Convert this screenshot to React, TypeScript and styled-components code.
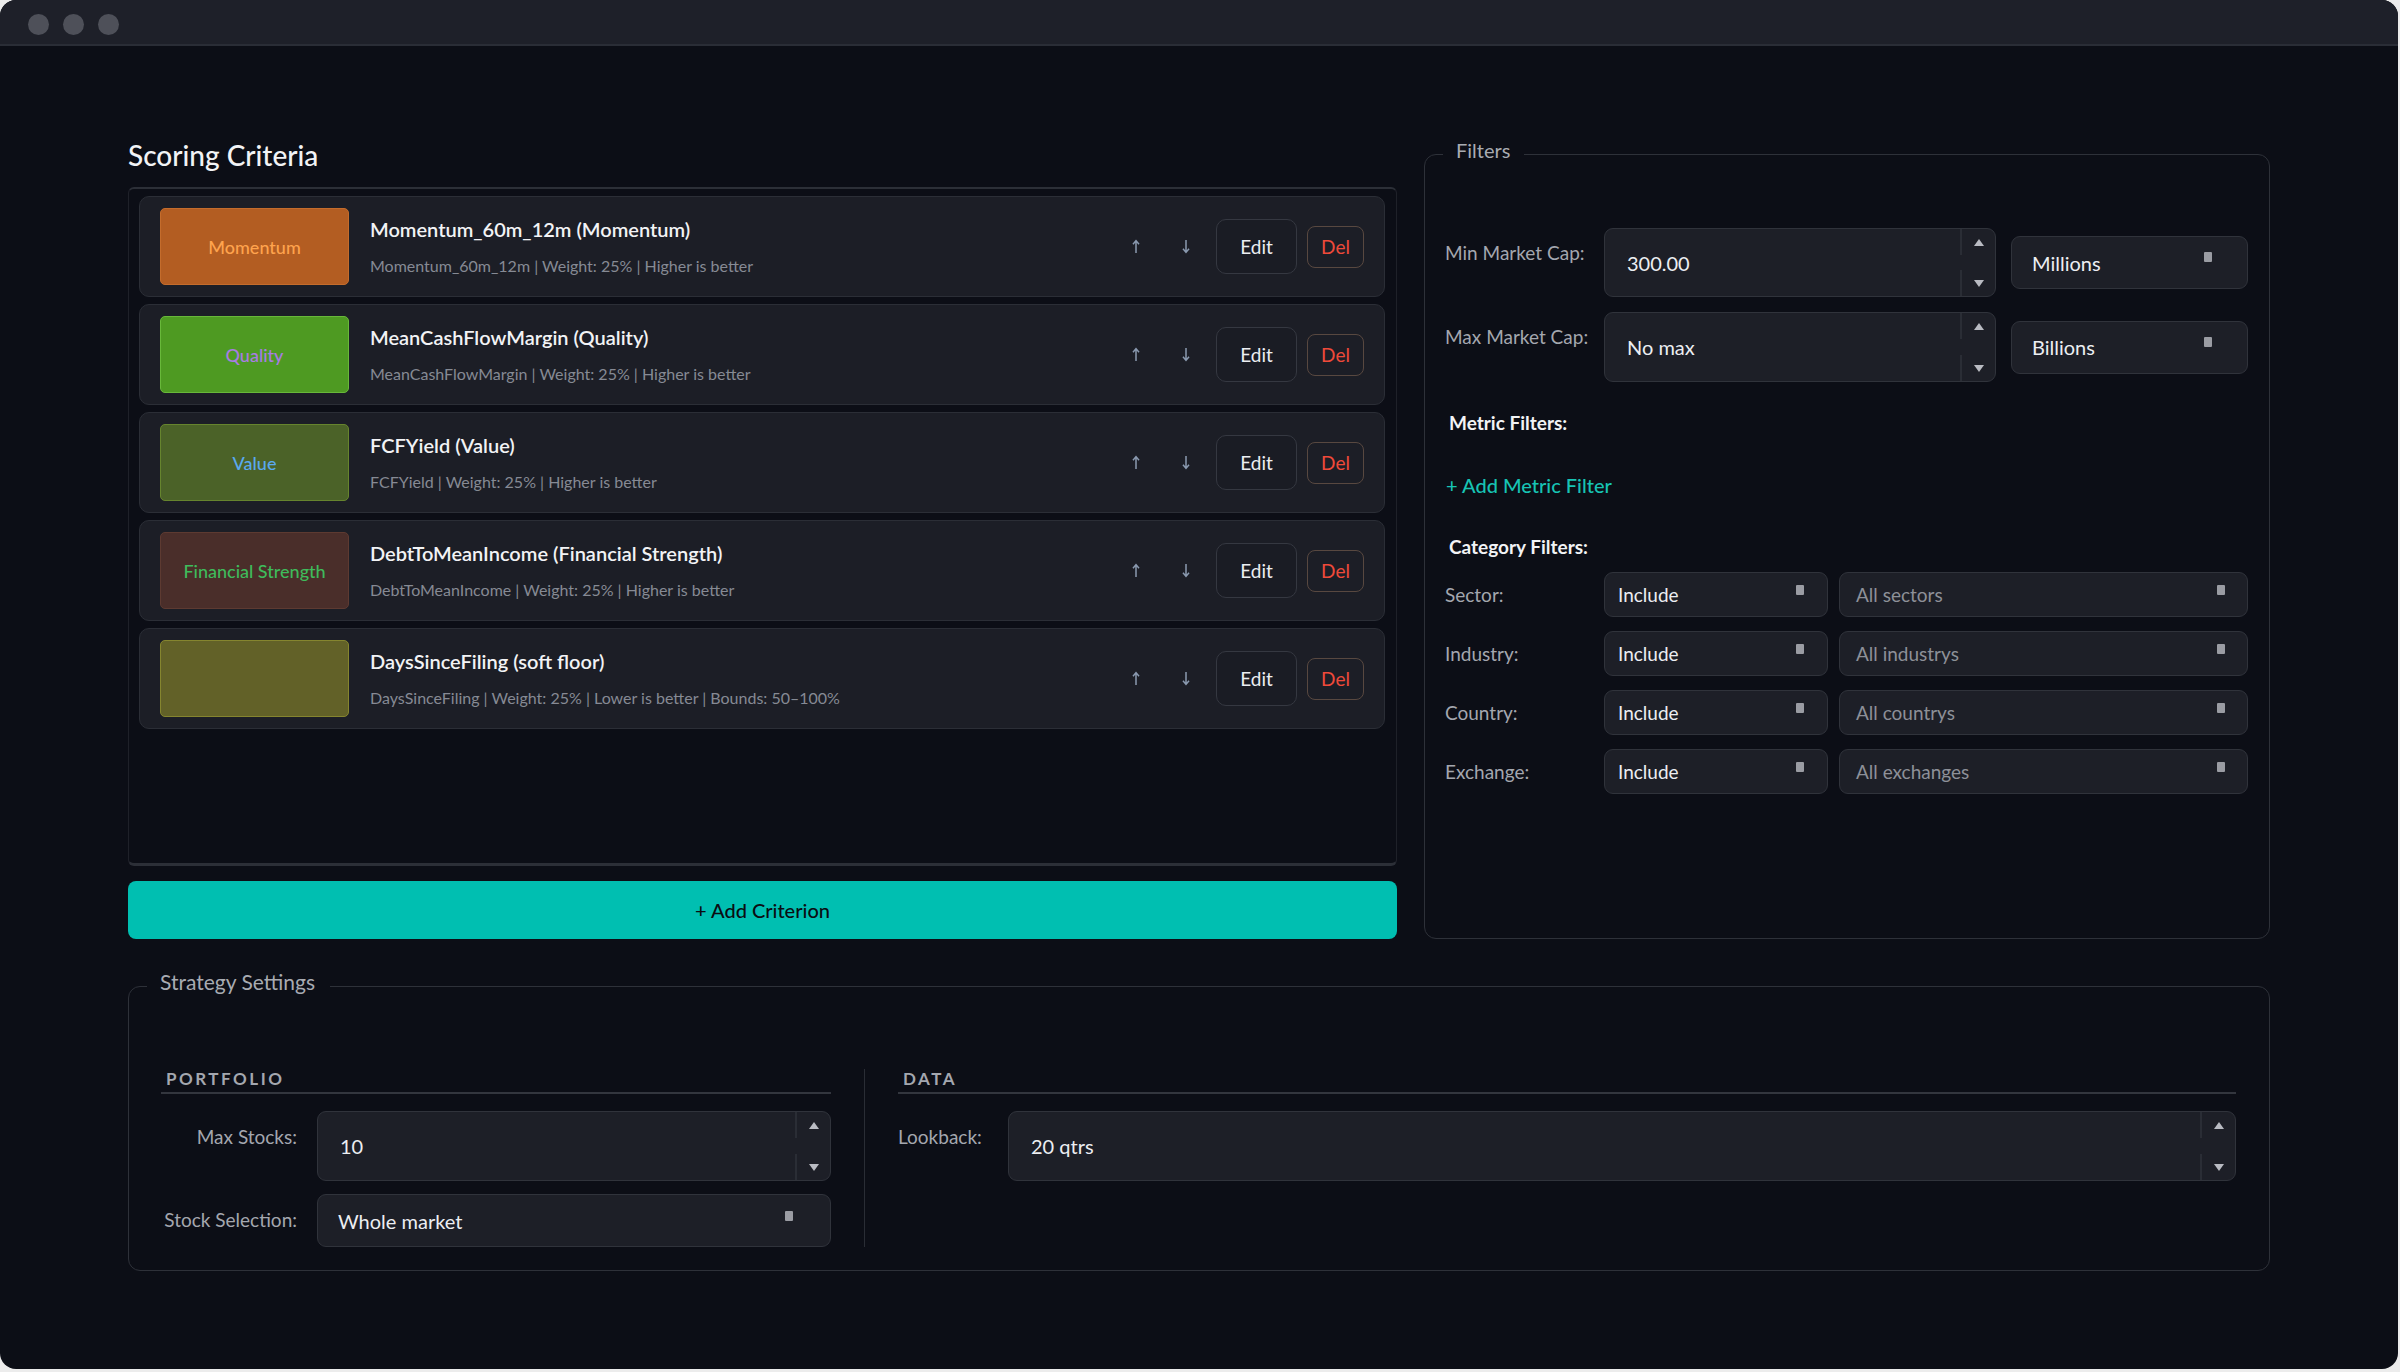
import React from "react";
import styled, { createGlobalStyle } from "styled-components";

type Criterion = {
    badge: string;
    bg: string;
    border: string;
    color: string;
    title: string;
    meta: string;
};

const criteria: Criterion[] = [
    {
        badge: "Momentum",
        bg: "#b35d22",
        border: "#c46c2c",
        color: "#ffa34d",
        title: "Momentum_60m_12m (Momentum)",
        meta: "Momentum_60m_12m | Weight: 25% | Higher is better",
    },
    {
        badge: "Quality",
        bg: "#4e9a22",
        border: "#68b83a",
        color: "#a87de3",
        title: "MeanCashFlowMargin (Quality)",
        meta: "MeanCashFlowMargin | Weight: 25% | Higher is better",
    },
    {
        badge: "Value",
        bg: "#4b6228",
        border: "#66842e",
        color: "#5aa9ef",
        title: "FCFYield (Value)",
        meta: "FCFYield | Weight: 25% | Higher is better",
    },
    {
        badge: "Financial Strength",
        bg: "#4a2e2a",
        border: "#5d3a31",
        color: "#3fbb5b",
        title: "DebtToMeanIncome (Financial Strength)",
        meta: "DebtToMeanIncome | Weight: 25% | Higher is better",
    },
    {
        badge: "",
        bg: "#626128",
        border: "#85852f",
        color: "#ffffff",
        title: "DaysSinceFiling (soft floor)",
        meta: "DaysSinceFiling | Weight: 25% | Lower is better | Bounds: 50–100%",
    },
];

const categories = [
    { label: "Sector:", placeholder: "All sectors" },
    { label: "Industry:", placeholder: "All industrys" },
    { label: "Country:", placeholder: "All countrys" },
    { label: "Exchange:", placeholder: "All exchanges" },
];

const Arrow = ({ down }: { down?: boolean }) => (
    <svg width="8" height="15" viewBox="0 0 8 15" style={{ transform: down ? "rotate(180deg)" : undefined }}>
        <path d="M4 14V2M1 5.2L4 1.6L7 5.2" stroke="#8a9ab0" strokeWidth="1.5" fill="none" />
    </svg>
);

const NumberInput = ({ value, height }: { value: string; height: number }) => (
    <NumberBox $h={height}>
        <NumberValue>{value}</NumberValue>
        <Spinner>
            <SpinBtn />
            <SpinBtn $down />
        </Spinner>
    </NumberBox>
);

type SelectProps = {
    value: string;
    height: number;
    padLeft: number;
    padRight: number;
    caretTop: number;
    muted?: boolean;
    size?: number;
};

const Select = ({ value, height, padLeft, padRight, caretTop, muted, size = 20 }: SelectProps) => (
    <SelectBox $h={height} $pl={padLeft} $pr={padRight} $muted={muted} $fs={size}>
        <span>{value}</span>
        <Caret $mt={caretTop} />
    </SelectBox>
);

export default function App() {
    return (
        <>
            <GlobalStyle />
            <Window>
                <TitleBar>
                    <Dot />
                    <Dot />
                    <Dot />
                </TitleBar>
                <Content>
                    <TopGrid>
                        <LeftColumn>
                            <PageTitle>Scoring Criteria</PageTitle>
                            <ListBox>
                                {criteria.map((c) => (
                                    <Card key={c.title}>
                                        <Badge $bg={c.bg} $border={c.border} $color={c.color}>
                                            {c.badge}
                                        </Badge>
                                        <CardText>
                                            <CardTitle>{c.title}</CardTitle>
                                            <CardMeta>{c.meta}</CardMeta>
                                        </CardText>
                                        <Actions>
                                            <ArrowButton>
                                                <Arrow />
                                            </ArrowButton>
                                            <ArrowButton>
                                                <Arrow down />
                                            </ArrowButton>
                                            <EditButton>Edit</EditButton>
                                            <DelButton>Del</DelButton>
                                        </Actions>
                                    </Card>
                                ))}
                            </ListBox>
                            <AddButton>+ Add Criterion</AddButton>
                        </LeftColumn>

                        <FiltersSet>
                            <Legend>Filters</Legend>
                            <CapRow>
                                <FieldLabel $top>Min Market Cap:</FieldLabel>
                                <NumberInput value="300.00" height={69} />
                                <Select value="Millions" height={53} padLeft={20} padRight={35} caretTop={15} />
                            </CapRow>
                            <CapRow>
                                <FieldLabel $top>Max Market Cap:</FieldLabel>
                                <NumberInput value="No max" height={70} />
                                <Select value="Billions" height={53} padLeft={20} padRight={35} caretTop={15} />
                            </CapRow>
                            <SubHeading $mt={29}>Metric Filters:</SubHeading>
                            <AddLink>+ Add Metric Filter</AddLink>
                            <SubHeading $mt={38}>Category Filters:</SubHeading>
                            <CategoryList>
                                {categories.map((cat) => (
                                    <CategoryRow key={cat.label}>
                                        <FieldLabel>{cat.label}</FieldLabel>
                                        <Select value="Include" height={45} padLeft={13} padRight={23} caretTop={12} size={19} />
                                        <Select value={cat.placeholder} height={45} padLeft={16} padRight={22} caretTop={12} size={19} muted />
                                    </CategoryRow>
                                ))}
                            </CategoryList>
                        </FiltersSet>
                    </TopGrid>

                    <StrategySet>
                        <Legend $wide>Strategy Settings</Legend>
                        <SettingsGrid>
                            <Section>
                                <SectionHeader>Portfolio</SectionHeader>
                                <PortfolioRow>
                                    <SettingLabel $right>Max Stocks:</SettingLabel>
                                    <NumberInput value="10" height={70} />
                                </PortfolioRow>
                                <PortfolioRow>
                                    <SettingLabel $right>Stock Selection:</SettingLabel>
                                    <Select value="Whole market" height={53} padLeft={20} padRight={37} caretTop={16} />
                                </PortfolioRow>
                            </Section>
                            <Divider />
                            <Section>
                                <SectionHeader>Data</SectionHeader>
                                <DataRow>
                                    <SettingLabel>Lookback:</SettingLabel>
                                    <NumberInput value="20 qtrs" height={70} />
                                </DataRow>
                            </Section>
                        </SettingsGrid>
                    </StrategySet>
                </Content>
            </Window>
        </>
    );
}

const GlobalStyle = createGlobalStyle`
    html, body {
        margin: 0;
        padding: 0;
        background: #ececec;
    }
    body {
        font-family: Lato, "Noto Sans", "Liberation Sans", sans-serif;
        color: #eceef2;
    }
    * {
        box-sizing: border-box;
    }
`;

const Window = styled.div`
    width: 2398px;
    height: 1369px;
    background: #0c0e16;
    border-radius: 16px;
    overflow: hidden;
    display: flex;
    flex-direction: column;
`;

const TitleBar = styled.div`
    height: 46px;
    flex-shrink: 0;
    display: flex;
    align-items: center;
    gap: 14px;
    padding: 4px 0 0 28px;
    background: #1e2029;
    border-bottom: 2px solid #2a2d36;
`;

const Dot = styled.span`
    width: 21px;
    height: 21px;
    border-radius: 50%;
    background: #4e5059;
`;

const Content = styled.div`
    padding: 92px 128px 0 128px;
`;

const TopGrid = styled.div`
    display: grid;
    grid-template-columns: 1269px 846px;
    column-gap: 27px;
`;

const LeftColumn = styled.div`
    display: flex;
    flex-direction: column;
`;

const PageTitle = styled.h2`
    margin: 0;
    font-size: 28px;
    line-height: 34px;
    font-weight: 500;
    color: #f2f3f5;
`;

const ListBox = styled.div`
    margin-top: 15px;
    height: 679px;
    padding: 7px 11px 0 10px;
    display: flex;
    flex-direction: column;
    gap: 7px;
    border: 1px solid #1f2129;
    border-top: 2px solid #2c2f37;
    border-bottom: 3px solid #2c2f37;
    border-radius: 6px;
`;

const Card = styled.div`
    height: 101px;
    display: flex;
    align-items: center;
    padding: 0 20px;
    background: #1c1e26;
    border: 1px solid #2b2e36;
    border-radius: 10px;
`;

const Badge = styled.div<{ $bg: string; $border: string; $color: string }>`
    width: 189px;
    height: 77px;
    flex-shrink: 0;
    display: flex;
    align-items: center;
    justify-content: center;
    background: ${(p) => p.$bg};
    border: 1px solid ${(p) => p.$border};
    border-radius: 5px;
    color: ${(p) => p.$color};
    font-size: 18px;
    font-weight: 500;
`;

const CardText = styled.div`
    flex: 1;
    margin-left: 21px;
    display: flex;
    flex-direction: column;
    gap: 15px;
`;

const CardTitle = styled.div`
    font-size: 20px;
    line-height: 24px;
    font-weight: 600;
    color: #f2f3f5;
`;

const CardMeta = styled.div`
    font-size: 16px;
    line-height: 20px;
    color: #868a94;
`;

const Actions = styled.div`
    display: flex;
    align-items: center;
    gap: 10px;
`;

const ArrowButton = styled.button`
    width: 40px;
    height: 40px;
    padding: 0;
    display: flex;
    align-items: center;
    justify-content: center;
    background: transparent;
    border: none;
`;

const EditButton = styled.button`
    width: 81px;
    height: 55px;
    padding: 0;
    background: #1a1c24;
    border: 1px solid #353841;
    border-radius: 10px;
    color: #eceef2;
    font-family: inherit;
    font-size: 19px;
`;

const DelButton = styled.button`
    width: 57px;
    height: 42px;
    padding: 0;
    background: transparent;
    border: 1px solid #584840;
    border-radius: 8px;
    color: #ef4a3a;
    font-family: inherit;
    font-size: 19px;
`;

const AddButton = styled.button`
    margin-top: 15px;
    height: 58px;
    background: #00bfb1;
    border: none;
    border-radius: 8px;
    color: #0b0d12;
    font-family: inherit;
    font-size: 20px;
    font-weight: 500;
`;

const FiltersSet = styled.fieldset`
    margin: 0;
    padding: 58px 21px 0 20px;
    border: 1px solid #2e3139;
    border-radius: 12px;
    min-width: 0;
`;

const StrategySet = styled.fieldset`
    margin: 31px 0 0 0;
    padding: 67px 33px 23px 32px;
    border: 1px solid #2e3139;
    border-radius: 12px;
    min-width: 0;
`;

const Legend = styled.legend<{ $wide?: boolean }>`
    margin-left: ${(p) => (p.$wide ? -14 : -2)}px;
    padding: 0 ${(p) => (p.$wide ? 15 : 14)}px 8px 13px;
    font-size: ${(p) => (p.$wide ? 21 : 20)}px;
    line-height: 24px;
    color: #a8abb2;
`;

const CapRow = styled.div`
    display: grid;
    grid-template-columns: 144px 392px 237px;
    column-gap: 15px;
    align-items: center;

    & + & {
        margin-top: 15px;
    }
`;

const FieldLabel = styled.span<{ $top?: boolean }>`
    align-self: ${(p) => (p.$top ? "start" : "center")};
    padding-top: ${(p) => (p.$top ? 13 : 0)}px;
    font-size: 19px;
    line-height: 24px;
    color: #a4a7af;
    white-space: nowrap;
`;

const NumberBox = styled.div<{ $h: number }>`
    height: ${(p) => p.$h}px;
    display: flex;
    align-items: center;
    background: #1d1f27;
    border: 1px solid #30333b;
    border-radius: 9px;
    overflow: hidden;
`;

const NumberValue = styled.span`
    flex: 1;
    padding-left: 22px;
    font-size: 20px;
    color: #eceef2;
`;

const Spinner = styled.div`
    align-self: stretch;
    width: 35px;
    display: flex;
    flex-direction: column;
    justify-content: space-between;
`;

const SpinBtn = styled.div<{ $down?: boolean }>`
    height: 26px;
    display: flex;
    align-items: center;
    justify-content: center;
    border-left: 2px solid #2a2d35;

    &::after {
        content: "";
        border-left: 5px solid transparent;
        border-right: 5px solid transparent;
        ${(p) => (p.$down ? "border-top: 7px solid #b9bbc2;" : "border-bottom: 7px solid #b9bbc2;")}
    }
`;

const SelectBox = styled.div<{ $h: number; $pl: number; $pr: number; $muted?: boolean; $fs: number }>`
    height: ${(p) => p.$h}px;
    display: flex;
    align-items: center;
    justify-content: space-between;
    padding: 0 ${(p) => p.$pr}px 0 ${(p) => p.$pl}px;
    background: #1d1f27;
    border: 1px solid #30333b;
    border-radius: 9px;
    font-size: ${(p) => p.$fs}px;
    color: ${(p) => (p.$muted ? "#8d9098" : "#eceef2")};
`;

const Caret = styled.span<{ $mt: number }>`
    align-self: flex-start;
    margin-top: ${(p) => p.$mt}px;
    width: 8px;
    height: 10px;
    border-radius: 1px;
    background: #9a9ca3;
`;

const SubHeading = styled.div<{ $mt: number }>`
    margin-top: ${(p) => p.$mt}px;
    padding-left: 4px;
    font-size: 19px;
    line-height: 24px;
    font-weight: 700;
    color: #f2f3f5;
`;

const AddLink = styled.div`
    margin-top: 38px;
    padding-left: 1px;
    font-size: 20px;
    line-height: 24px;
    font-weight: 500;
    color: #17c4b4;
`;

const CategoryList = styled.div`
    margin-top: 13px;
    display: flex;
    flex-direction: column;
    gap: 14px;
`;

const CategoryRow = styled.div`
    display: grid;
    grid-template-columns: 148px 224px 1fr;
    column-gap: 11px;
    align-items: center;
`;

const SettingsGrid = styled.div`
    display: grid;
    grid-template-columns: 670px 1px 1fr;
    column-gap: 33px;
`;

const Section = styled.div`
    display: flex;
    flex-direction: column;
`;

const Divider = styled.div`
    background: #2a2d35;
`;

const SectionHeader = styled.div`
    padding: 0 0 3px 5px;
    margin-bottom: 17px;
    border-bottom: 2px solid #33363e;
    font-size: 17px;
    line-height: 20px;
    font-weight: 700;
    letter-spacing: 2.5px;
    text-transform: uppercase;
    color: #a4a7af;
`;

const PortfolioRow = styled.div`
    display: grid;
    grid-template-columns: 136px 514px;
    column-gap: 20px;
    align-items: start;

    & + & {
        margin-top: 13px;
    }
`;

const DataRow = styled.div`
    display: grid;
    grid-template-columns: 110px 1fr;
    align-items: start;
`;

const SettingLabel = styled.span<{ $right?: boolean }>`
    padding-top: 14px;
    text-align: ${(p) => (p.$right ? "right" : "left")};
    font-size: 19px;
    line-height: 24px;
    color: #a4a7af;
`;
